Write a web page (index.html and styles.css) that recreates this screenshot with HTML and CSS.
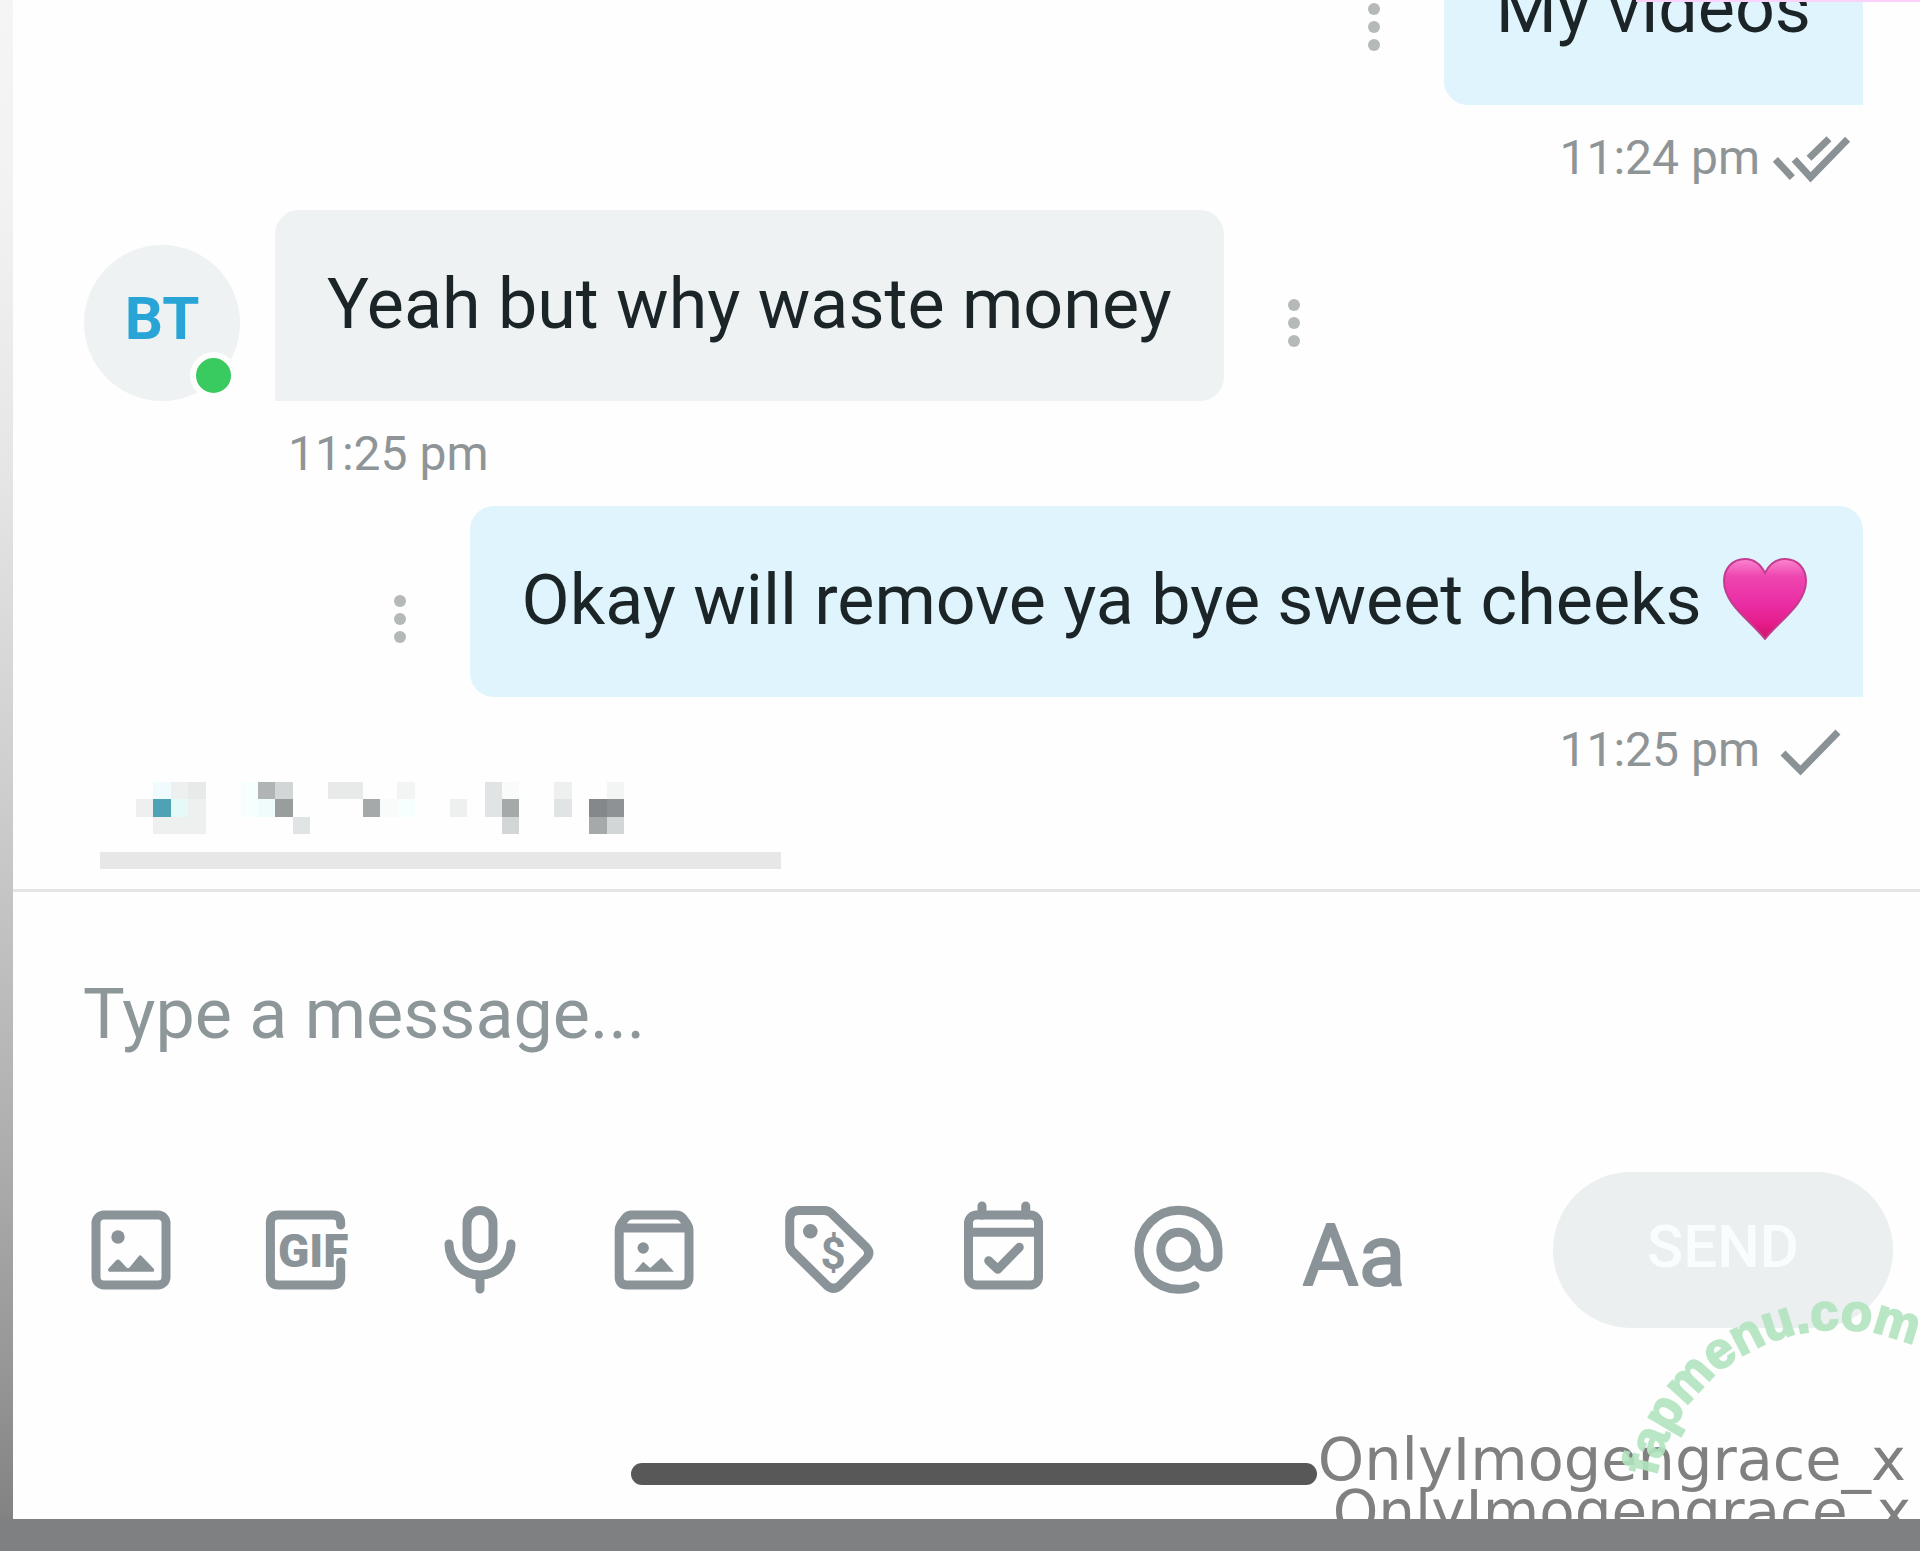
FILE: index.html
```html
<!DOCTYPE html>
<html lang="en">
<head>
<meta charset="utf-8">
<meta name="viewport" content="width=device-width, initial-scale=1">
<title>Messages</title>
<link rel="stylesheet" href="styles.css">
</head>
<body>
<div class="screen">
  <main class="chat">
    <section class="thread" aria-label="Conversation">
      <ol class="messages">
        <li class="message message-out">
          <div class="message-row">
            <p class="bubble">My videos</p>
            <button class="more" type="button" aria-label="Message options">
              <svg class="more-icon" viewBox="0 0 48 60"><circle cx="24" cy="12" r="6"/><circle cx="24" cy="30" r="6"/><circle cx="24" cy="48" r="6"/></svg>
            </button>
          </div>
          <div class="meta">
            <time>11:24 pm</time>
            <svg class="tick" viewBox="0 0 84 56" role="img" aria-label="Read"><path d="M7.4 29.3 24.3 47.7M26.3 29.3 42.6 47.3 79.6 9.3M41 28.3 61 8.7"/></svg>
          </div>
        </li>
        <li class="message message-in">
          <div class="message-row">
            <div class="avatar">BT<span class="online"></span></div>
            <p class="bubble">Yeah but why waste money</p>
            <button class="more" type="button" aria-label="Message options">
              <svg class="more-icon" viewBox="0 0 48 60"><circle cx="24" cy="12" r="6"/><circle cx="24" cy="30" r="6"/><circle cx="24" cy="48" r="6"/></svg>
            </button>
          </div>
          <div class="meta"><time>11:25 pm</time></div>
        </li>
        <li class="message message-out">
          <div class="message-row">
            <p class="bubble">Okay will remove ya bye sweet cheeks <svg class="heart" viewBox="0 0 84 82" role="img" aria-label="Pink heart">
              <defs>
                <linearGradient id="heart-fill" x1="0" y1="0" x2="0" y2="1">
                  <stop offset="0" stop-color="#fb86cf"/><stop offset=".22" stop-color="#ee45b0"/><stop offset=".55" stop-color="#ea2ea4"/><stop offset=".8" stop-color="#e61d8b"/><stop offset="1" stop-color="#d01266"/>
                </linearGradient>
              </defs>
              <path d="M42 15C37 5 30 1 22 1 9 1 1 11 1 23 1 46 27 62 42 81 57 62 83 46 83 23 83 11 75 1 62 1 54 1 47 5 42 15Z" fill="url(#heart-fill)" stroke="#c23c90" stroke-width="2"/>
            </svg></p>
            <button class="more" type="button" aria-label="Message options">
              <svg class="more-icon" viewBox="0 0 48 60"><circle cx="24" cy="12" r="6"/><circle cx="24" cy="30" r="6"/><circle cx="24" cy="48" r="6"/></svg>
            </button>
          </div>
          <div class="meta">
            <time>11:25 pm</time>
            <svg class="tick" viewBox="0 0 84 56" role="img" aria-label="Sent"><path d="M15 31 32.500 48.500 70 10"/></svg>
          </div>
        </li>
      </ol>
      <div class="censored">
        <svg class="mosaic" viewBox="-1 0 28 3" preserveAspectRatio="none" shape-rendering="crispEdges" aria-hidden="true">
          <path fill="#effbfd" d="M0 0h1v1h-1zM6 1h1v1h-1z"/>
          <path fill="#f7fefe" d="M5 0h1v2h-1zM14 1h1v1h-1z"/>
          <path fill="#eeefef" d="M1 0h1v1h-1zM-1 1h1v1h-1zM2 1h1v1h-1zM0 2h3v1h-3zM17 1h1v1h-1zM23 0h1v1h-1z"/>
          <path fill="#f3f5f5" d="M14 0h1v1h-1zM26 0h1v1h-1z"/>
          <path fill="#e8e9e9" d="M2 0h1v1h-1zM10 0h2v1h-2z"/>
          <path fill="#f9fafa" d="M20 0h1v1h-1zM13 1h1v1h-1z"/>
          <path fill="#e1e4e5" d="M8 2h1v1h-1zM19 0h1v2h-1zM23 1h1v1h-1z"/>
          <path fill="#e4f9f8" d="M1 1h1v1h-1z"/>
          <path fill="#4fa1b4" d="M0 1h1v1h-1z"/>
          <path fill="#d2d6d7" d="M7 0h1v1h-1zM20 2h1v1h-1zM26 2h1v1h-1z"/>
          <path fill="#b0b4b4" d="M6 0h1v1h-1z"/>
          <path fill="#a5a9a9" d="M12 1h1v1h-1zM20 1h1v1h-1zM25 2h1v1h-1z"/>
          <path fill="#999d9d" d="M7 1h1v1h-1z"/>
          <path fill="#85888a" d="M25 1h1v1h-1z"/>
          <path fill="#8f9294" d="M26 1h1v1h-1z"/>
        </svg>
        <div class="censor-bar"></div>
      </div>
    </section>

    <form class="composer">
      <input class="composer-input" type="text" aria-label="Message" placeholder="Type a message...">
      <div class="composer-actions">
        <div class="tools">
          <button class="tool" type="button" aria-label="Add image">
            <svg viewBox="0 0 96 96"><rect x="13" y="13" width="70" height="70" rx="8"/><g class="solid"><circle cx="35" cy="35" r="6.7"/><path d="M26 69.7Q24 68 26 66L33 58.5Q35 56.5 37 58.5L43.500 65.500Q45 66.500 46.500 65.500L55.500 54.500Q57 52 59 54.500L71 67Q72 69 70 69.700Z"/></g></svg>
          </button>
          <button class="tool" type="button" aria-label="Add GIF">
            <svg viewBox="0 0 96 96"><path d="M83.700 23V21Q83.700 13 75.700 13H21.400Q13.400 13 13.400 21V75Q13.400 83 21.400 83H75.700Q83.700 83 83.700 75V60"/><text class="gif-label" x="21" y="65">GIF</text></svg>
          </button>
          <button class="tool" type="button" aria-label="Record voice">
            <svg viewBox="0 0 96 96"><rect x="35" y="8.400" width="26" height="48" rx="13"/><path d="M17 42a31 31 0 0 0 62 0M48 73V87"/></svg>
          </button>
          <button class="tool" type="button" aria-label="Add from vault">
            <svg viewBox="0 0 96 96"><path d="M13.200 28V75Q13.200 83 21.200 83H75Q83 83 83 75V28Q83 25 81 22L77 16.500Q74.500 13 70 13H26Q21.500 13 19 16.500L15 22Q13.200 25 13.200 28ZM15 26H81"/><g class="solid"><circle cx="37.200" cy="46" r="5.700"/><path d="M28.500 69.700 37.200 59.700 44.200 66 55.500 55.700 67.800 69.700Z"/></g></svg>
          </button>
          <button class="tool" type="button" aria-label="Set price">
            <svg viewBox="0 0 96 96"><path d="M18 8.400H43Q47.500 8.400 50.500 11.400L85 45Q90.500 51 85 57L59 83.500Q52.500 89 46 83.500L11.500 49.500Q8.700 46.500 8.700 42V18Q8.700 8.400 18 8.400Z"/><circle class="solid" cx="29.300" cy="29.300" r="7.300"/><text class="price-label" x="52" y="67">$</text></svg>
          </button>
          <button class="tool" type="button" aria-label="Schedule">
            <svg viewBox="0 0 96 96"><rect x="13.500" y="13" width="70" height="70" rx="8"/><path d="M14 30.300H83M27 4V13M70.700 4V13M33.700 58.700 42.700 67.300 64.300 45.300"/></svg>
          </button>
          <button class="tool" type="button" aria-label="Mention">
            <svg viewBox="0 0 96 96"><circle cx="48.300" cy="47.700" r="17.500"/><path d="M66 48V54.500A11 11 0 0 0 88 54V48A39.500 39.500 0 1 0 48.300 87.300Q57.500 87.300 65 83.700"/></svg>
          </button>
          <button class="tool" type="button" aria-label="Text style">
            <svg viewBox="0 0 96 96"><text class="style-label" x="50" y="83">Aa</text></svg>
          </button>
        </div>
        <button class="send" type="submit" disabled>SEND</button>
      </div>
    </form>
    <div class="home-bar"></div>

    <div class="credit credit-top">OnlyImogengrace_x</div>
    <div class="credit credit-low">OnlyImogengrace_x</div>
    <svg class="stamp" viewBox="0 0 320 250" aria-label="fapmenu.com">
      <defs><path id="stamp-arc" d="M56 206A186 186 0 0 1 424 244"/></defs>
      <text><textPath href="#stamp-arc">fapmenu.com</textPath></text>
    </svg>
    <div class="top-edge"></div>
  </main>
</div>
</body>
</html>
```
FILE: styles.css
```css
* {
  box-sizing: border-box;
}

body {
  margin: 0;
  font-family: Roboto, "Liberation Sans", sans-serif;
  color: #1b2427;
}

button,
input {
  padding: 0;
  border: 0;
  background: none;
  font: inherit;
}

.screen {
  display: flex;
  flex-direction: column;
  height: 100vh;
  padding: 0 0 32px 13px;
  background:
    linear-gradient(#7e8081, #7e8081) bottom / 100% 32px no-repeat,
    linear-gradient(#f5f5f5 0%, #f2f2f2 13%, #e6e6e6 30%, #cfcfcf 50%, #b4b4b4 70%, #979797 88%, #828282 98%);
}

.chat {
  position: relative;
  display: flex;
  flex: 1;
  flex-direction: column;
  min-height: 0;
  overflow: hidden;
  background: #fefefe;
}

.thread {
  display: flex;
  flex: 1;
  flex-direction: column;
  justify-content: flex-end;
  min-height: 0;
  overflow: hidden;
  padding: 0 57px 20px 71px;
}

.messages {
  display: flex;
  flex-direction: column;
  gap: 24px;
  margin: 0;
  padding: 0;
  list-style: none;
}

.message-row {
  display: flex;
  align-items: flex-end;
}

.message-out .message-row {
  flex-direction: row-reverse;
}

.bubble {
  margin: 0;
  padding: 46px 52px 49px;
  border-radius: 24px;
  font-size: 70px;
  line-height: 96px;
}

.message-in .bubble {
  margin-left: 35px;
  border-bottom-left-radius: 0;
  background: #eef2f3;
}

.message-out .bubble {
  border-bottom-right-radius: 0;
  background: #dff4fc;
}

.heart {
  width: 84px;
  height: 82px;
  margin: 0 4px;
  vertical-align: -16px;
}

.more {
  display: flex;
  align-items: center;
  height: 156px;
  margin: 0 46px;
}

.more-icon {
  width: 48px;
  height: 60px;
  fill: #b5b9ba;
}

.avatar {
  position: relative;
  width: 156px;
  height: 156px;
  border-radius: 50%;
  background: #eef2f3;
  color: #28a5d6;
  font-size: 60px;
  font-weight: 700;
  line-height: 148px;
  text-align: center;
}

.online {
  position: absolute;
  right: 3px;
  bottom: 2px;
  width: 47px;
  height: 47px;
  border: 6px solid #fefefe;
  border-radius: 50%;
  background: #3acb60;
}

.meta {
  display: flex;
  gap: 8px;
  margin-top: 25px;
  color: #8f9597;
  font-size: 48px;
  line-height: 56px;
}

.message-in .meta {
  padding-left: 204px;
}

.message-out .meta {
  justify-content: flex-end;
  padding-right: 11px;
}

.tick {
  width: 84px;
  height: 56px;
  fill: none;
  stroke: #8b9295;
  stroke-width: 7;
}

.censored {
  margin-top: 4px;
}

.mosaic {
  display: block;
  width: 488px;
  height: 52px;
  margin-left: 52px;
}

.censor-bar {
  width: 681px;
  height: 17px;
  margin: 18px 0 0 16px;
  background: #e7e7e7;
}

.composer {
  padding: 74px 27px 0 70px;
  border-top: 3px solid #e4e6e6;
}

.composer-input {
  display: block;
  width: 100%;
  height: 96px;
  outline: 0;
  font-size: 70px;
  line-height: 96px;
}

.composer-input::placeholder {
  color: #8d9699;
  opacity: 1;
}

.composer-actions {
  display: flex;
  align-items: center;
  margin-top: 110px;
}

.tools {
  display: flex;
  flex: 1;
  justify-content: space-between;
  margin-right: 153px;
}

.tool {
  width: 96px;
  height: 96px;
}

.tool svg {
  display: block;
  overflow: visible;
  width: 96px;
  height: 96px;
  fill: none;
  stroke: #8a9398;
  stroke-width: 9;
  stroke-linecap: round;
  stroke-linejoin: round;
}

.tool .solid,
.tool text {
  fill: #8a9398;
  stroke: none;
}

.tool .gif-label {
  font-size: 46px;
  font-weight: 900;
}

.tool .price-label {
  font-size: 44px;
  font-weight: 700;
  text-anchor: middle;
}

.tool .style-label {
  font-size: 86px;
  stroke: #8a9398;
  stroke-width: 2;
  text-anchor: middle;
}

.send {
  width: 340px;
  height: 156px;
  padding-bottom: 8px;
  border-radius: 78px;
  background: #ebefef;
  color: #fafdfd;
  font-size: 60px;
  font-weight: 500;
}

.home-bar {
  width: 686px;
  height: 22px;
  margin: 135px 0 34px 32.4%;
  border-radius: 11px;
  background: #585858;
}

.credit {
  position: absolute;
  color: #808080;
  font-family: "DejaVu Sans", sans-serif;
  line-height: 70px;
}

.credit-top {
  right: 14px;
  bottom: 24px;
  font-size: 59px;
}

.credit-low {
  right: 9px;
  bottom: -28px;
  font-size: 58px;
}

.stamp {
  position: absolute;
  right: 0;
  bottom: -2px;
  width: 320px;
  height: 250px;
  fill: #b2e4bf;
  stroke: #b2e4bf;
  stroke-width: 2;
  opacity: .9;
  font-family: "Liberation Sans", sans-serif;
  font-size: 51px;
  font-weight: 700;
}

.stamp defs {
  stroke: none;
}

.top-edge {
  position: absolute;
  top: 0;
  right: 0;
  width: 284px;
  height: 2px;
  background: #fbd3fa;
}
```
